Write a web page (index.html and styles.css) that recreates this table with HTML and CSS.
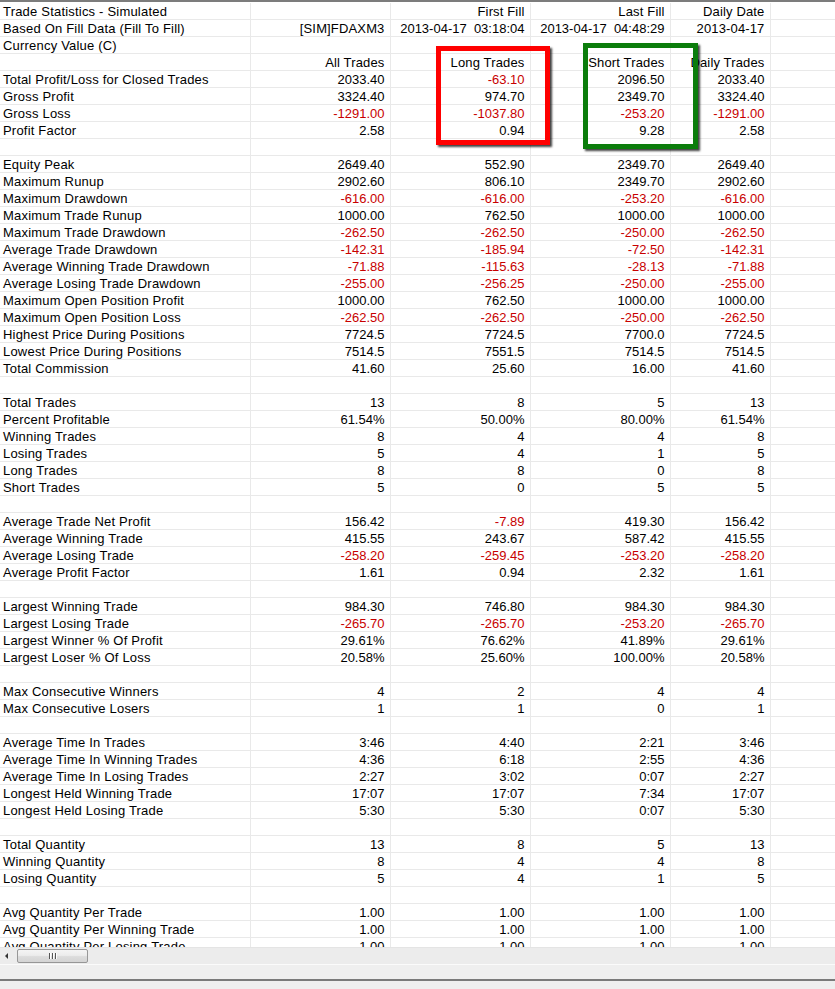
FILE: index.html
```html
<!DOCTYPE html>
<html>
<head>
<meta charset="utf-8">
<title>Trade Statistics - Simulated</title>
<link rel="stylesheet" href="styles.css">
</head>
<body>
<div class="window">
  <div class="grid-area">
    <table class="stats">
      <colgroup>
        <col class="c-label"><col class="c-num"><col class="c-num"><col class="c-num"><col class="c-daily"><col class="c-rest">
      </colgroup>
      <tbody>
        <tr><td class="lbl">Trade Statistics - Simulated</td><td></td><td class="hd">First Fill</td><td class="hd">Last Fill</td><td class="hd">Daily Date</td><td></td></tr>
        <tr><td class="lbl">Based On Fill Data (Fill To Fill)</td><td class="hd">[SIM]FDAXM3</td><td class="hd pre">2013-04-17  03:18:04</td><td class="hd pre">2013-04-17  04:48:29</td><td class="hd">2013-04-17</td><td></td></tr>
        <tr><td class="lbl">Currency Value (C)</td><td></td><td></td><td></td><td></td><td></td></tr>
        <tr><td></td><td class="hd">All Trades</td><td class="hd">Long Trades</td><td class="hd">Short Trades</td><td class="hd">Daily Trades</td><td></td></tr>
        <tr><td class="lbl">Total Profit/Loss for Closed Trades</td><td>2033.40</td><td class="neg">-63.10</td><td>2096.50</td><td>2033.40</td><td></td></tr>
        <tr><td class="lbl">Gross Profit</td><td>3324.40</td><td>974.70</td><td>2349.70</td><td>3324.40</td><td></td></tr>
        <tr><td class="lbl">Gross Loss</td><td class="neg">-1291.00</td><td class="neg">-1037.80</td><td class="neg">-253.20</td><td class="neg">-1291.00</td><td></td></tr>
        <tr><td class="lbl">Profit Factor</td><td>2.58</td><td>0.94</td><td>9.28</td><td>2.58</td><td></td></tr>
        <tr><td></td><td></td><td></td><td></td><td></td><td></td></tr>
        <tr><td class="lbl">Equity Peak</td><td>2649.40</td><td>552.90</td><td>2349.70</td><td>2649.40</td><td></td></tr>
        <tr><td class="lbl">Maximum Runup</td><td>2902.60</td><td>806.10</td><td>2349.70</td><td>2902.60</td><td></td></tr>
        <tr><td class="lbl">Maximum Drawdown</td><td class="neg">-616.00</td><td class="neg">-616.00</td><td class="neg">-253.20</td><td class="neg">-616.00</td><td></td></tr>
        <tr><td class="lbl">Maximum Trade Runup</td><td>1000.00</td><td>762.50</td><td>1000.00</td><td>1000.00</td><td></td></tr>
        <tr><td class="lbl">Maximum Trade Drawdown</td><td class="neg">-262.50</td><td class="neg">-262.50</td><td class="neg">-250.00</td><td class="neg">-262.50</td><td></td></tr>
        <tr><td class="lbl">Average Trade Drawdown</td><td class="neg">-142.31</td><td class="neg">-185.94</td><td class="neg">-72.50</td><td class="neg">-142.31</td><td></td></tr>
        <tr><td class="lbl">Average Winning Trade Drawdown</td><td class="neg">-71.88</td><td class="neg">-115.63</td><td class="neg">-28.13</td><td class="neg">-71.88</td><td></td></tr>
        <tr><td class="lbl">Average Losing Trade Drawdown</td><td class="neg">-255.00</td><td class="neg">-256.25</td><td class="neg">-250.00</td><td class="neg">-255.00</td><td></td></tr>
        <tr><td class="lbl">Maximum Open Position Profit</td><td>1000.00</td><td>762.50</td><td>1000.00</td><td>1000.00</td><td></td></tr>
        <tr><td class="lbl">Maximum Open Position Loss</td><td class="neg">-262.50</td><td class="neg">-262.50</td><td class="neg">-250.00</td><td class="neg">-262.50</td><td></td></tr>
        <tr><td class="lbl">Highest Price During Positions</td><td>7724.5</td><td>7724.5</td><td>7700.0</td><td>7724.5</td><td></td></tr>
        <tr><td class="lbl">Lowest Price During Positions</td><td>7514.5</td><td>7551.5</td><td>7514.5</td><td>7514.5</td><td></td></tr>
        <tr><td class="lbl">Total Commission</td><td>41.60</td><td>25.60</td><td>16.00</td><td>41.60</td><td></td></tr>
        <tr><td></td><td></td><td></td><td></td><td></td><td></td></tr>
        <tr><td class="lbl">Total Trades</td><td>13</td><td>8</td><td>5</td><td>13</td><td></td></tr>
        <tr><td class="lbl">Percent Profitable</td><td>61.54%</td><td>50.00%</td><td>80.00%</td><td>61.54%</td><td></td></tr>
        <tr><td class="lbl">Winning Trades</td><td>8</td><td>4</td><td>4</td><td>8</td><td></td></tr>
        <tr><td class="lbl">Losing Trades</td><td>5</td><td>4</td><td>1</td><td>5</td><td></td></tr>
        <tr><td class="lbl">Long Trades</td><td>8</td><td>8</td><td>0</td><td>8</td><td></td></tr>
        <tr><td class="lbl">Short Trades</td><td>5</td><td>0</td><td>5</td><td>5</td><td></td></tr>
        <tr><td></td><td></td><td></td><td></td><td></td><td></td></tr>
        <tr><td class="lbl">Average Trade Net Profit</td><td>156.42</td><td class="neg">-7.89</td><td>419.30</td><td>156.42</td><td></td></tr>
        <tr><td class="lbl">Average Winning Trade</td><td>415.55</td><td>243.67</td><td>587.42</td><td>415.55</td><td></td></tr>
        <tr><td class="lbl">Average Losing Trade</td><td class="neg">-258.20</td><td class="neg">-259.45</td><td class="neg">-253.20</td><td class="neg">-258.20</td><td></td></tr>
        <tr><td class="lbl">Average Profit Factor</td><td>1.61</td><td>0.94</td><td>2.32</td><td>1.61</td><td></td></tr>
        <tr><td></td><td></td><td></td><td></td><td></td><td></td></tr>
        <tr><td class="lbl">Largest Winning Trade</td><td>984.30</td><td>746.80</td><td>984.30</td><td>984.30</td><td></td></tr>
        <tr><td class="lbl">Largest Losing Trade</td><td class="neg">-265.70</td><td class="neg">-265.70</td><td class="neg">-253.20</td><td class="neg">-265.70</td><td></td></tr>
        <tr><td class="lbl">Largest Winner % Of Profit</td><td>29.61%</td><td>76.62%</td><td>41.89%</td><td>29.61%</td><td></td></tr>
        <tr><td class="lbl">Largest Loser % Of Loss</td><td>20.58%</td><td>25.60%</td><td>100.00%</td><td>20.58%</td><td></td></tr>
        <tr><td></td><td></td><td></td><td></td><td></td><td></td></tr>
        <tr><td class="lbl">Max Consecutive Winners</td><td>4</td><td>2</td><td>4</td><td>4</td><td></td></tr>
        <tr><td class="lbl">Max Consecutive Losers</td><td>1</td><td>1</td><td>0</td><td>1</td><td></td></tr>
        <tr><td></td><td></td><td></td><td></td><td></td><td></td></tr>
        <tr><td class="lbl">Average Time In Trades</td><td>3:46</td><td>4:40</td><td>2:21</td><td>3:46</td><td></td></tr>
        <tr><td class="lbl">Average Time In Winning Trades</td><td>4:36</td><td>6:18</td><td>2:55</td><td>4:36</td><td></td></tr>
        <tr><td class="lbl">Average Time In Losing Trades</td><td>2:27</td><td>3:02</td><td>0:07</td><td>2:27</td><td></td></tr>
        <tr><td class="lbl">Longest Held Winning Trade</td><td>17:07</td><td>17:07</td><td>7:34</td><td>17:07</td><td></td></tr>
        <tr><td class="lbl">Longest Held Losing Trade</td><td>5:30</td><td>5:30</td><td>0:07</td><td>5:30</td><td></td></tr>
        <tr><td></td><td></td><td></td><td></td><td></td><td></td></tr>
        <tr><td class="lbl">Total Quantity</td><td>13</td><td>8</td><td>5</td><td>13</td><td></td></tr>
        <tr><td class="lbl">Winning Quantity</td><td>8</td><td>4</td><td>4</td><td>8</td><td></td></tr>
        <tr><td class="lbl">Losing Quantity</td><td>5</td><td>4</td><td>1</td><td>5</td><td></td></tr>
        <tr><td></td><td></td><td></td><td></td><td></td><td></td></tr>
        <tr><td class="lbl">Avg Quantity Per Trade</td><td>1.00</td><td>1.00</td><td>1.00</td><td>1.00</td><td></td></tr>
        <tr><td class="lbl">Avg Quantity Per Winning Trade</td><td>1.00</td><td>1.00</td><td>1.00</td><td>1.00</td><td></td></tr>
        <tr><td class="lbl">Avg Quantity Per Losing Trade</td><td>1.00</td><td>1.00</td><td>1.00</td><td>1.00</td><td></td></tr>
      </tbody>
    </table>
    <div class="mark mark-red"></div>
    <div class="mark mark-green"></div>
  </div>
  <div class="hscroll">
    <div class="arrow-left"></div>
    <div class="thumb"><span class="grip"></span><span class="grip"></span><span class="grip"></span></div>
  </div>
  <div class="strip"></div>
  <div class="bottom"></div>
</div>
</body>
</html>
```
FILE: styles.css
```css
html, body {
  margin: 0;
  padding: 0;
  background: #ffffff;
}

.window {
  width: 835px;
  height: 989px;
  display: flex;
  flex-direction: column;
  overflow: hidden;
  font-family: "Liberation Sans", Arial, sans-serif;
  font-size: 13px;
  color: #000;
}

.grid-area {
  position: relative;
  flex: none;
  overflow: hidden;
  border-top: 2px solid #7c7c7c;
  padding-top: 1px;
  box-sizing: content-box;
  height: 944px;
  background: #fff;
}

.stats {
  border-collapse: collapse;
  table-layout: fixed;
  width: 836px;
}

.c-label { width: 250px; }
.c-num { width: 140px; }
.c-daily { width: 100px; }
.c-rest { width: 66px; }

.stats td {
  box-sizing: content-box;
  height: 14px;
  line-height: 14px;
  padding: 2px 5px 0 3px;
  border-right: 1px solid #e9e9e9;
  border-bottom: 1px solid #e9e9e9;
  text-align: right;
  white-space: nowrap;
  overflow: hidden;
  vertical-align: top;
}

.stats td.lbl {
  text-align: left;
  letter-spacing: 0.2px;
}

.stats td.hd {
  letter-spacing: 0.15px;
}

.stats td.pre {
  white-space: pre;
  letter-spacing: 0;
}

.stats td.neg {
  color: #c80000;
}

.mark {
  position: absolute;
  box-sizing: border-box;
  border-style: solid;
  border-width: 5px;
  box-shadow: 2px 2px 2px rgba(0, 0, 0, 0.75);
  pointer-events: none;
}

.mark-red {
  left: 436px;
  top: 44px;
  width: 114px;
  height: 99px;
  border-color: #ff0000;
}

.mark-green {
  left: 583px;
  top: 41px;
  width: 115px;
  height: 106px;
  border-color: #0b7d0b;
}

.hscroll {
  position: relative;
  flex: none;
  height: 17px;
  background: #ececec;
  border-top: 1px solid #e4e4e4;
  box-sizing: border-box;
}

.arrow-left {
  position: absolute;
  left: 5px;
  top: 5px;
  width: 0;
  height: 0;
  border-top: 3px solid transparent;
  border-bottom: 3px solid transparent;
  border-right: 3px solid #333;
}

.thumb {
  position: absolute;
  left: 17px;
  top: 1px;
  width: 71px;
  height: 14px;
  box-sizing: border-box;
  border: 1px solid #979797;
  border-radius: 2px;
  background: linear-gradient(to bottom, #f4f4f4 0%, #ececec 45%, #dcdcdc 55%, #d4d4d4 100%);
  display: flex;
  justify-content: center;
  align-items: center;
  gap: 1px;
}

.grip {
  display: block;
  width: 1px;
  height: 6px;
  background: #555;
  box-shadow: 1px 0 0 #fff;
  margin-right: 1px;
}

.strip {
  flex: none;
  height: 14px;
  background: #efefef;
  border-top: 1px solid #fbfbfb;
  box-sizing: content-box;
}

.bottom {
  flex: 1;
  background: #efefef;
  border-top: 2px solid #7a7a7a;
}
```
